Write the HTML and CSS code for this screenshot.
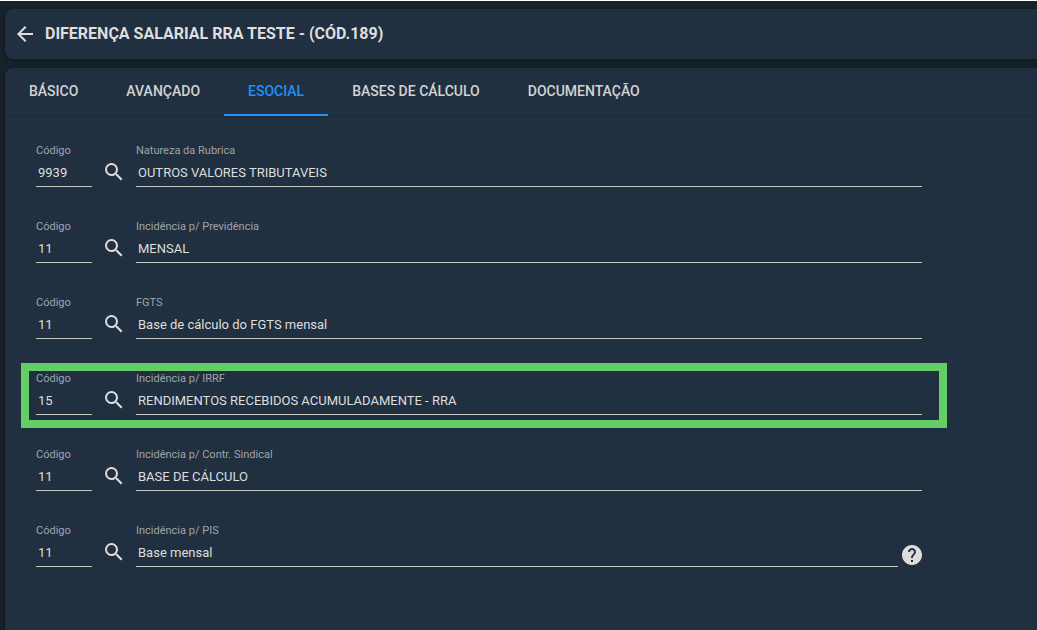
FILE: index.html
```html
<!DOCTYPE html>
<html lang="pt-BR">
<head>
    <meta charset="UTF-8">
    <meta name="viewport" content="width=device-width, initial-scale=1.0">
    <title>Diferença Salarial RRA Teste</title>
    <link rel="stylesheet" href="styles.css">
</head>
<body>
    <svg class="sprite" aria-hidden="true">
        <symbol id="search" viewBox="0 0 24 24">
            <path d="M15.5 14h-.79l-.28-.27A6.471 6.471 0 0 0 16 9.5 6.5 6.5 0 1 0 9.5 16c1.61 0 3.09-.59 4.23-1.57l.27.28v.79l5 4.99L20.49 19l-4.99-5zm-6 0C7.01 14 5 11.99 5 9.5S7.01 5 9.5 5 14 7.01 14 9.5 11.99 14 9.5 14z"/>
        </symbol>
    </svg>

    <header class="card title-bar">
        <button class="icon-button" aria-label="Voltar">
            <svg viewBox="0 0 24 24"><path d="M20 11H7.83l5.59-5.59L12 4l-8 8 8 8 1.41-1.41L7.83 13H20v-2z"/></svg>
        </button>
        <h1>DIFERENÇA SALARIAL RRA TESTE - (CÓD.189)</h1>
    </header>

    <main class="card panel">
        <nav class="tabs">
            <a href="#basico">BÁSICO</a>
            <a href="#avancado">AVANÇADO</a>
            <a href="#esocial" class="active" aria-current="page">ESOCIAL</a>
            <a href="#bases">BASES DE CÁLCULO</a>
            <a href="#documentacao">DOCUMENTAÇÃO</a>
        </nav>

        <form>
            <div class="row">
                <div class="field code">
                    <label for="natureza-cod">Código</label>
                    <input id="natureza-cod" value="9939">
                </div>
                <button type="button" class="icon-button" aria-label="Pesquisar"><svg><use href="#search"/></svg></button>
                <div class="field">
                    <label for="natureza">Natureza da Rubrica</label>
                    <input id="natureza" value="OUTROS VALORES TRIBUTAVEIS">
                </div>
            </div>

            <div class="row">
                <div class="field code">
                    <label for="previdencia-cod">Código</label>
                    <input id="previdencia-cod" value="11">
                </div>
                <button type="button" class="icon-button" aria-label="Pesquisar"><svg><use href="#search"/></svg></button>
                <div class="field">
                    <label for="previdencia">Incidência p/ Previdência</label>
                    <input id="previdencia" value="MENSAL">
                </div>
            </div>

            <div class="row">
                <div class="field code">
                    <label for="fgts-cod">Código</label>
                    <input id="fgts-cod" value="11">
                </div>
                <button type="button" class="icon-button" aria-label="Pesquisar"><svg><use href="#search"/></svg></button>
                <div class="field">
                    <label for="fgts">FGTS</label>
                    <input id="fgts" value="Base de cálculo do FGTS mensal">
                </div>
            </div>

            <div class="row highlight">
                <div class="field code">
                    <label for="irrf-cod">Código</label>
                    <input id="irrf-cod" value="15">
                </div>
                <button type="button" class="icon-button" aria-label="Pesquisar"><svg><use href="#search"/></svg></button>
                <div class="field">
                    <label for="irrf">Incidência p/ IRRF</label>
                    <input id="irrf" value="RENDIMENTOS RECEBIDOS ACUMULADAMENTE - RRA">
                </div>
            </div>

            <div class="row">
                <div class="field code">
                    <label for="sindical-cod">Código</label>
                    <input id="sindical-cod" value="11">
                </div>
                <button type="button" class="icon-button" aria-label="Pesquisar"><svg><use href="#search"/></svg></button>
                <div class="field">
                    <label for="sindical">Incidência p/ Contr. Sindical</label>
                    <input id="sindical" value="BASE DE CÁLCULO">
                </div>
            </div>

            <div class="row">
                <div class="field code">
                    <label for="pis-cod">Código</label>
                    <input id="pis-cod" value="11">
                </div>
                <button type="button" class="icon-button" aria-label="Pesquisar"><svg><use href="#search"/></svg></button>
                <div class="field">
                    <label for="pis">Incidência p/ PIS</label>
                    <input id="pis" value="Base mensal">
                </div>
                <button type="button" class="icon-button help" aria-label="Ajuda">
                    <svg viewBox="2 2 20 20"><path d="M12 2C6.48 2 2 6.48 2 12s4.48 10 10 10 10-4.48 10-10S17.52 2 12 2zm1 17h-2v-2h2v2zm2.07-7.75l-.9.92C13.45 12.9 13 13.5 13 15h-2v-.5c0-1.1.45-2.1 1.17-2.83l1.24-1.26c.37-.36.59-.86.59-1.41 0-1.1-.9-2-2-2s-2 .9-2 2H8c0-2.21 1.79-4 4-4s4 1.79 4 4c0 .88-.36 1.68-.93 2.25z"/></svg>
                </button>
            </div>
        </form>
    </main>
</body>
</html>
```
FILE: styles.css
```css
* {
    box-sizing: border-box;
}

body {
    display: flex;
    flex-direction: column;
    gap: 9px;
    min-height: 100vh;
    margin: 0;
    padding: 8px 0 0 5px;
    border-top: 1px solid #fff;
    background: #18222b;
    color: #dedede;
    font-family: Roboto, sans-serif;
}

.sprite {
    display: none;
}

.card {
    background: #213040;
    box-shadow: 0 1px 4px rgba(0, 0, 0, 0.4);
}

.title-bar {
    display: flex;
    align-items: center;
    gap: 8px;
    height: 50px;
    padding: 0 8px;
    border-radius: 8px 0 0 8px;
}

h1 {
    margin: 0;
    font-size: 16px;
    font-weight: 700;
    line-height: 24px;
}

.icon-button {
    flex: none;
    width: 24px;
    height: 24px;
    padding: 0;
    border: 0;
    background: none;
    color: inherit;
    cursor: pointer;

    svg {
        display: block;
        width: 100%;
        height: 100%;
        fill: currentColor;
    }
}

.panel {
    flex-grow: 1;
    border-radius: 8px 0 0 0;
}

.tabs {
    display: flex;
    border-bottom: 1px solid #1c2a36;

    a {
        height: 48px;
        padding: 0 24px;
        border-bottom: 2px solid transparent;
        color: #d3d3d3;
        font-size: 14px;
        font-weight: 500;
        line-height: 46px;
        text-decoration: none;
    }

    .active {
        border-color: #2091f9;
        color: #2091f9;
    }
}

form {
    display: flex;
    flex-direction: column;
    gap: 32px;
    padding: 26px 115px 32px 31px;
}

.row {
    position: relative;
    display: flex;
    align-items: flex-end;
    gap: 10px;

    .icon-button {
        margin-bottom: 3px;
    }

    .help {
        width: 20px;
        height: 20px;
        margin: 0 0 2px -6px;
    }
}

.field {
    display: flex;
    flex-direction: column;
    flex: 1;
    min-width: 0;

    label {
        color: #a0a4a8;
        font-size: 11px;
        line-height: 16px;
    }

    input {
        width: 100%;
        height: 28px;
        padding: 0 2px;
        border: 0;
        border-bottom: 1px solid #c8c8c4;
        background: none;
        color: #dedede;
        font-family: inherit;
        font-size: 13px;
        outline: 0;
    }
}

.code {
    flex: 0 0 56px;
}

.highlight::after {
    content: "";
    position: absolute;
    inset: -8px -25px -13px -15px;
    border: 8px solid #66cc66;
    pointer-events: none;
}
```
